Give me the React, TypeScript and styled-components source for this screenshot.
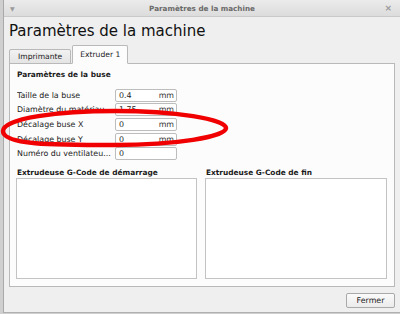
import React from "react"
import styled, { createGlobalStyle } from "styled-components"

const GlobalStyle = createGlobalStyle`
  html, body {
    margin: 0;
    padding: 0;
    background: #d2d2d2;
    font-family: "DejaVu Sans", "Liberation Sans", sans-serif;
  }
`

const Desktop = styled.div`
  position: relative;
  width: 400px;
  height: 314px;
  overflow: hidden;
  background: #cfcfcf;
  padding-left: 3px;
  box-sizing: border-box;
`

const Window = styled.div`
  width: 397px;
  height: 313px;
  background: #efefef;
  border-left: 1px solid #a9a9a9;
  border-bottom: 1px solid #b0b0b0;
  box-sizing: border-box;
  display: flex;
  flex-direction: column;
`

const TitleBar = styled.div`
  height: 17px;
  flex-shrink: 0;
  display: grid;
  grid-template-columns: 30px 1fr 30px;
  align-items: center;
  background: linear-gradient(#ebebeb, #dcdcdc);
  border-bottom: 1px solid #c9c9c9;
  box-sizing: border-box;
`

const TitleText = styled.div`
  text-align: center;
  font-size: 7.2px;
  font-weight: bold;
  color: #6a6a6a;
`

const MenuGlyph = styled.span`
  justify-self: start;
  padding-left: 6px;
  font-size: 6px;
  color: #9a9a9a;
`

const CloseGlyph = styled.span`
  justify-self: end;
  padding-right: 8px;
  font-size: 9px;
  font-weight: bold;
  color: #9a9a9a;
`

const Body = styled.div`
  flex: 1;
  display: flex;
  flex-direction: column;
  padding: 0 5px 0 5px;
`

const Heading = styled.h1`
  margin: 0;
  height: 29px;
  line-height: 29px;
  font-size: 15px;
  font-weight: normal;
  color: #111;
`

const TabRow = styled.div`
  display: flex;
  align-items: flex-end;
  height: 18px;
  position: relative;
  z-index: 1;
  margin-bottom: -1px;
`

const Tab = styled.div<{ $active?: boolean }>`
  box-sizing: border-box;
  height: ${p => (p.$active ? "19px" : "15px")};
  padding: 0 ${p => (p.$active ? "7px" : "8px")};
  display: flex;
  align-items: center;
  font-size: 7.6px;
  color: #222;
  border: 1px solid #b9b9b9;
  border-bottom: ${p => (p.$active ? "1px solid #fcfcfc" : "1px solid #b9b9b9")};
  border-radius: 2px 2px 0 0;
  background: ${p => (p.$active ? "#fcfcfc" : "linear-gradient(#f2f2f2, #e4e4e4)")};
  margin-right: ${p => (p.$active ? "0" : "1px")};
`

const Panel = styled.div`
  box-sizing: border-box;
  height: 224px;
  border: 1px solid #b9b9b9;
  background: #fcfcfc;
  padding: 4px 5px 0 6px;
  display: flex;
  flex-direction: column;
`

const SectionTitle = styled.div`
  font-size: 7.4px;
  font-weight: bold;
  color: #1a1a1a;
  height: 14px;
  line-height: 14px;
  padding-left: 1px;
`

const FieldGrid = styled.div`
  margin-top: 6.5px;
  display: grid;
  grid-template-columns: 98px 62px;
  row-gap: 1.7px;
  padding-left: 1px;
`

const FieldLabel = styled.div`
  font-size: 7.9px;
  color: #222;
  height: 13px;
  line-height: 13px;
  white-space: nowrap;
  overflow: hidden;
`

const Field = styled.div`
  box-sizing: border-box;
  height: 13px;
  border: 1px solid #bdbdbd;
  border-radius: 2px;
  background: #fff;
  display: flex;
  align-items: center;
  justify-content: space-between;
  padding: 0 2px 0 3px;
  font-size: 7.9px;
  color: #222;
`

const Unit = styled.span`
  color: #333;
`

const CodeColumns = styled.div`
  margin-top: 7.5px;
  display: grid;
  grid-template-columns: 181px 182px;
  column-gap: 8px;
`

const CodeBlock = styled.div`
  display: flex;
  flex-direction: column;
`

const CodeTitle = styled(SectionTitle)`
  height: 9px;
  line-height: 9px;
`

const CodeArea = styled.div`
  height: 101px;
  box-sizing: border-box;
  border: 1px solid #c3c3c3;
  background: #fff;
  margin-top: 1px;
`

const Footer = styled.div`
  display: flex;
  justify-content: flex-end;
  padding-top: 6px;
`

const Button = styled.button`
  width: 49px;
  height: 15px;
  box-sizing: border-box;
  border: 1px solid #a9a9a9;
  border-radius: 2px;
  background: linear-gradient(#fbfbfb, #ebebeb);
  font-family: inherit;
  font-size: 7.9px;
  color: #222;
  padding: 0;
`

const Annotation = styled.svg`
  position: absolute;
  left: 0;
  top: 0;
  pointer-events: none;
`

const fields = [
  { label: "Taille de la buse", value: "0.4", unit: "mm" },
  { label: "Diamètre du matériau", value: "1.75", unit: "mm" },
  { label: "Décalage buse X", value: "0", unit: "mm" },
  { label: "Décalage buse Y", value: "0", unit: "mm" },
  { label: "Numéro du ventilateu...", value: "0", unit: "" },
]

export default function App() {
  return (
    <>
      <GlobalStyle />
      <Desktop>
        <Window>
          <TitleBar>
            <MenuGlyph>▼</MenuGlyph>
            <TitleText>Paramètres de la machine</TitleText>
            <CloseGlyph>×</CloseGlyph>
          </TitleBar>
          <Body>
            <Heading>Paramètres de la machine</Heading>
            <TabRow>
              <Tab>Imprimante</Tab>
              <Tab $active>Extruder 1</Tab>
            </TabRow>
            <Panel>
              <SectionTitle>Paramètres de la buse</SectionTitle>
              <FieldGrid>
                {fields.map(f => (
                  <React.Fragment key={f.label}>
                    <FieldLabel>{f.label}</FieldLabel>
                    <Field>
                      <span>{f.value}</span>
                      <Unit>{f.unit}</Unit>
                    </Field>
                  </React.Fragment>
                ))}
              </FieldGrid>
              <CodeColumns>
                <CodeBlock>
                  <CodeTitle>Extrudeuse G-Code de démarrage</CodeTitle>
                  <CodeArea />
                </CodeBlock>
                <CodeBlock>
                  <CodeTitle>Extrudeuse G-Code de fin</CodeTitle>
                  <CodeArea />
                </CodeBlock>
              </CodeColumns>
            </Panel>
            <Footer>
              <Button>Fermer</Button>
            </Footer>
          </Body>
        </Window>
        {/* hand-drawn red mark around the offset fields */}
        <Annotation width="400" height="314" viewBox="0 0 400 314">
          <path
            d="M 3 131 C 3 118, 60 111, 115 111 C 175 111, 226 119, 226 128 C 226 137, 175 145, 115 145 C 52 145, 3 145, 3 131 Z"
            fill="none"
            stroke="#f00000"
            strokeWidth="4.5"
          />
        </Annotation>
      </Desktop>
    </>
  )
}
